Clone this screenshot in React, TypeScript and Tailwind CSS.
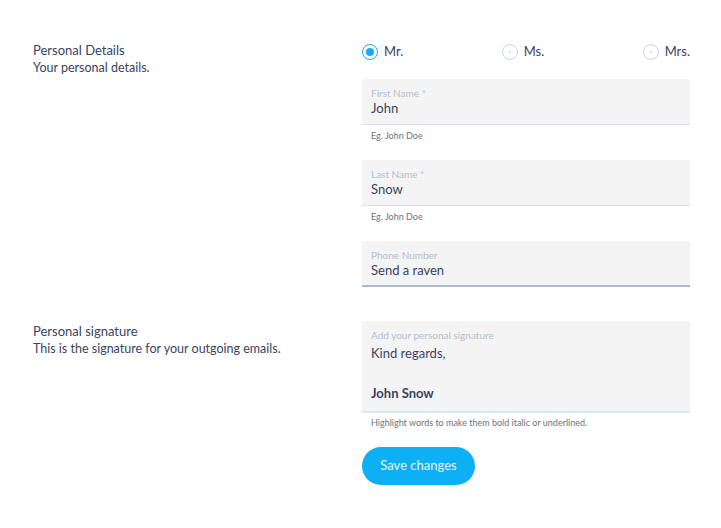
import React from 'react'

const font = { fontFamily: 'Lato, "Open Sans", sans-serif' }

function Radio({ label, checked }: { label: string; checked?: boolean }) {
  return (
    <label className="flex items-center gap-[6px] text-[13px] text-[#3a4360]">
      <span
        className={
          checked
            ? 'flex size-4 items-center justify-center rounded-full border border-[#1aa9ef]'
            : 'flex size-4 items-center justify-center rounded-full border border-[#c9d4df]'
        }
      >
        <span
          className={checked ? 'size-2 rounded-full bg-[#1aa9ef]' : 'size-[2px] rounded-full bg-[#d2dce6]'}
        />
      </span>
      {label}
    </label>
  )
}

function Field({
  label,
  value,
  helper,
  focused,
}: {
  label: string
  value: string
  helper?: string
  focused?: boolean
}) {
  return (
    <div>
      <div
        className={
          focused
            ? 'rounded-t-[3px] border-b-2 border-[#a9bac9] bg-[#f4f4f4] px-[9px] pt-2 pb-[6px]'
            : 'rounded-t-[3px] border-b border-[#dbe2ea] bg-[#f4f4f4] px-[9px] pt-2 pb-[7px]'
        }
      >
        <div className="text-[10px] leading-3 text-[#b5c0cc]">{label}</div>
        <div className="text-[13px] leading-[18px] text-[#3a4360]">{value}</div>
      </div>
      {helper && <div className="mt-[5px] px-[9px] text-[9px] leading-3 text-[#6d737d]">{helper}</div>}
    </div>
  )
}

export default function App() {
  return (
    <div className="min-h-[528px] bg-white pt-[41px] pr-[31px] pl-[33px]" style={font}>
      <div className="flex">
        <div className="w-[329px] shrink-0">
          <p className="text-[13px] leading-[18px] text-[#3a4360]">Personal Details</p>
          <p className="text-[12.5px] leading-[18px] text-[#3a4360]">Your personal details.</p>
        </div>
        <div className="w-[328px] shrink-0">
          <div className="mt-[2px] flex h-[18px] items-center justify-between">
            <Radio label="Mr." checked />
            <Radio label="Ms." />
            <Radio label="Mrs." />
          </div>
          <div className="mt-[18px] flex flex-col gap-[18px]">
            <Field label="First Name *" value="John" helper="Eg. John Doe" />
            <Field label="Last Name *" value="Snow" helper="Eg. John Doe" />
            <Field label="Phone Number" value="Send a raven" focused />
          </div>
        </div>
      </div>

      <div className="mt-[34px] flex">
        <div className="w-[329px] shrink-0 pt-px">
          <p className="text-[13px] leading-[18px] text-[#3a4360]">Personal signature</p>
          <p className="text-[12.5px] leading-[18px] text-[#3a4360]">
            This is the signature for your outgoing emails.
          </p>
        </div>
        <div className="w-[328px] shrink-0">
          <div className="rounded-t-[3px] border-b-2 border-[#e3e8ed] bg-[#f4f4f4] px-[9px] pt-2 pb-2">
            <div className="text-[10px] leading-3 text-[#b5c0cc]">Add your personal signature</div>
            <div className="mt-0.5 text-[13px] leading-5 text-[#3a4360]">
              <p>Kind regards,</p>
              <p>&nbsp;</p>
              <p className="font-bold">John Snow</p>
            </div>
          </div>
          <div className="mt-1 px-[9px] text-[9px] leading-3 text-[#6d737d]">
            Highlight words to make them bold italic or underlined.
          </div>
          <button className="mt-[18px] h-[38px] w-[113px] rounded-full bg-[#0db0f4] text-[13px] text-[#e6f6fe]">
            Save changes
          </button>
        </div>
      </div>
    </div>
  )
}
